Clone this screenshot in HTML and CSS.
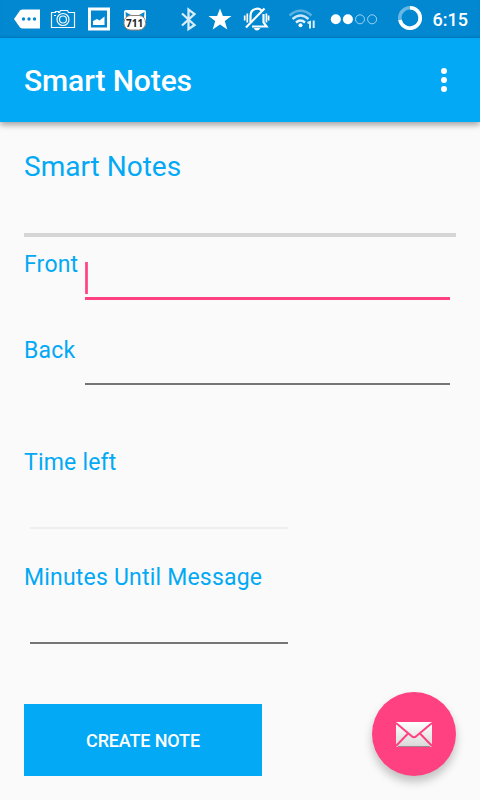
FILE: index.html
```
<!DOCTYPE html>
<html lang="en">
<head>
    <meta charset="UTF-8">
    <meta name="viewport" content="width=device-width, initial-scale=1.0">
    <title>Smart Notes</title>
    <link rel="stylesheet" href="styles.css">
</head>
<body>
    <!-- Status bar -->
    <div class="status-bar">
        <svg class="status-icons" width="480" height="38" viewBox="0 0 480 38">
            <!-- message -->
            <path d="M14 19L20 10.500Q21 9.500 23 9.500H40V28.500H23Q21 28.500 20 27.500Z" fill="#fff"/>
            <g fill="#0288d1"><circle cx="23.500" cy="19" r="1.700"/><circle cx="29" cy="19" r="1.700"/><circle cx="34.500" cy="19" r="1.700"/></g>
            <!-- camera -->
            <g fill="none" stroke="#fff" stroke-opacity=".95" stroke-width="1.200">
                <path d="M51.500 12.500H55.500V11.500H58.500V12.500H59.500L60.500 10.500H67.500L68.500 12.500H74.500V27.500H51.500Z"/>
                <circle cx="63" cy="19.500" r="6"/>
                <circle cx="63" cy="19.500" r="3.500"/>
            </g>
            <path d="M54 15h2v1h-2z" fill="#fff"/>
            <!-- picture -->
            <path fill="#fff" fill-rule="evenodd" d="M88 7.500H110V30.500H88ZM91 10.500V27.500H107V10.500Z"/>
            <path fill="#fff" d="M93 25V21L97 19L99.500 20.500L104.500 16.500V25Z"/>
            <!-- 711 cat -->
            <rect x="124" y="10" width="22" height="16" rx="2" fill="#fff"/>
            <path d="M125.500 12L132 15.500L126 18ZM144.500 12L138 15.500L144 18Z" fill="#0288d1"/>
            <rect x="124" y="15.500" width="21.500" height="14.500" rx="6.500" fill="#fff" stroke="#8b8179"/>
            <text class="badge" x="134.700" y="26.500" text-anchor="middle">711</text>
            <!-- bluetooth -->
            <path d="M182 13.500L194.500 25L188.500 29V9.500L194.500 14L182 25.500" fill="none" stroke="#fff" stroke-opacity=".85" stroke-width="2.300"/>
            <!-- star -->
            <path fill="#fff" d="M220 8.500L222.900 16H231.500L224.800 21L227.300 29.500L220 24.400L212.700 29.500L215.200 21L208.500 16H217.100Z"/>
            <!-- muted bell -->
            <g fill="none" stroke="#fff" stroke-width="2.200">
                <path d="M250.500 22V16Q250.500 10 255.500 9Q259 8 261.500 10.500M263.500 14V22.500L266.500 26.500H252"/>
                <path d="M246 27.500L264.500 8.500"/>
                <path d="M247.300 13.500V22.500M244.700 15.500V20.500M266.400 13.500V22.500M268.600 15.500V20.500" stroke-width="1.700"/>
            </g>
            <path d="M253.500 28H260.500Q257 33 253.500 28Z" fill="#fff"/>
            <!-- wifi -->
            <g fill="none" stroke="#fff" stroke-width="2.400">
                <path d="M289.500 15.500Q300.500 6 311.500 15.500" stroke-opacity=".35"/>
                <path d="M292.500 19Q300.500 12 308.500 19" stroke-opacity=".8"/>
                <path d="M296 22.500Q300.500 18.500 305 22.500" stroke-opacity=".9"/>
            </g>
            <circle cx="300.500" cy="25.300" r="2" fill="#fff"/>
            <path d="M307.500 23L310 22V28.500M313.700 20.500V28" fill="none" stroke="#fff" stroke-opacity=".85" stroke-width="2"/>
            <!-- signal -->
            <circle cx="335.800" cy="19.300" r="5" fill="#fff"/>
            <circle cx="347.900" cy="19.300" r="5" fill="#fff"/>
            <g fill="none" stroke="#fff" stroke-opacity=".6">
                <circle cx="360" cy="19.300" r="4.500"/>
                <circle cx="372.100" cy="19.300" r="4.500"/>
            </g>
            <!-- battery ring -->
            <circle cx="410" cy="18" r="10.200" fill="none" stroke="#fff" stroke-opacity=".4" stroke-width="3.600"/>
            <path d="M410 7.800A10.200 10.200 0 1 1 400 20" fill="none" stroke="#fff" stroke-width="3.600"/>
        </svg>
        <span class="clock">6:15</span>
    </div>

    <header class="app-bar">
        <span class="app-title">Smart Notes</span>
        <button class="menu-button" aria-label="Menu">
            <i></i><i></i><i></i>
        </button>
    </header>

    <main class="content">
        <h1>Smart Notes</h1>
        <hr>

        <div class="row row-front">
            <label for="front">Front</label>
            <div class="field">
                <input class="focused" id="front" type="text">
                <span class="caret"></span>
            </div>
        </div>

        <div class="row row-back">
            <label for="back">Back</label>
            <div class="field">
                <input id="back" type="text">
            </div>
        </div>

        <div class="block block-time">
            <label for="time">Time left</label>
            <input id="time" type="text" disabled>
        </div>

        <div class="block">
            <label for="minutes">Minutes Until Message</label>
            <input id="minutes" type="text">
        </div>

        <button class="create">CREATE NOTE</button>
    </main>

    <!-- Floating button -->
    <button class="fab" aria-label="Mail">
        <svg width="36" height="26" viewBox="0 0 36 26">
            <defs>
                <linearGradient id="paper" x1="0" y1="0" x2="0" y2="1">
                    <stop offset="0" stop-color="#fff"/>
                    <stop offset="1" stop-color="#d8d8d8"/>
                </linearGradient>
            </defs>
            <rect x="0" y="0" width="36" height="25" rx="1" fill="url(#paper)"/>
            <path d="M2 24.500H34" stroke="#a0848c" stroke-width="1"/>
            <path d="M0 1L15.500 14Q18 16.500 20.500 14L36 1M0 24L12 11.500M36 24L24 11.500" fill="none" stroke="#ff4081" stroke-width="2"/>
        </svg>
    </button>
</body>
</html>
```

FILE: styles.css
```
* {
    box-sizing: border-box;
}

body {
    margin: 0;
    height: 800px;
    overflow: hidden;
    background-color: #fafafa;
    color: #03a9f4;
    font-family: Roboto, sans-serif;
}

button {
    border: none;
    padding: 0;
    font-family: inherit;
    cursor: pointer;
}

/* Status bar */
.status-bar {
    position: relative;
    display: flex;
    justify-content: flex-end;
    height: 38px;
    padding-right: 12px;
    background-color: #0288d1;
    box-shadow: inset 0 -1px 1px #027fc4;
}

.status-icons {
    position: absolute;
    top: 0;
    left: 0;
}

.badge {
    font: bold 10px "Open Sans", sans-serif;
    fill: #222;
}

.clock {
    color: #fff;
    font-size: 18px;
    font-weight: 500;
    line-height: 40px;
}

/* App bar */
.app-bar {
    position: relative;
    display: flex;
    justify-content: space-between;
    align-items: center;
    height: 84px;
    padding: 0 24px;
    background-color: #03a9f4;
    box-shadow: 0 3px 6px rgba(0, 0, 0, 0.35);
}

.app-title {
    color: #fff;
    font-size: 30px;
    font-weight: 500;
    line-height: 36px;
    padding-top: 2px;
    letter-spacing: -0.1px;
}

.menu-button {
    display: flex;
    flex-direction: column;
    align-items: center;
    gap: 3px;
    width: 24px;
    background: none;
}

.menu-button i {
    width: 6px;
    height: 6px;
    border-radius: 50%;
    background-color: #fff;
}

/* Form */
.content {
    padding: 28px 24px 0;
}

h1 {
    margin: 0;
    font-size: 28px;
    font-weight: 400;
    line-height: 33px;
}

hr {
    height: 4px;
    margin: 50px 0 13px;
    border: none;
    background-color: #d5d5d5;
}

label {
    height: 28px;
    font-size: 23px;
    line-height: 30px;
    letter-spacing: 0.2px;
}

input {
    display: block;
    width: 100%;
    padding: 0;
    border: none;
    border-bottom: 2px solid #757575;
    background: none;
    outline: none;
    font-size: 27px;
}

input.focused {
    border-bottom: 3px solid #ff4081;
}

input:disabled {
    border-bottom-color: #eee;
}

.row {
    display: grid;
    grid-template-columns: 61px 365px;
}

.row-front {
    margin-bottom: 36px;
}

.row-front input {
    height: 50px;
}

.row-back {
    margin-bottom: 63px;
}

.row-back input {
    height: 49px;
}

.field {
    position: relative;
}

.caret {
    position: absolute;
    left: 0;
    top: 12px;
    width: 3px;
    height: 32px;
    background: linear-gradient(to right, #ff6b9c, #ff4081, #ff6b9c);
}

.block {
    display: flex;
    flex-direction: column;
}

.block input {
    width: 258px;
    height: 53px;
    margin-left: 6px;
}

.block-time {
    margin-bottom: 34px;
}

.create {
    display: block;
    width: 238px;
    height: 72px;
    margin-top: 60px;
    background-color: #03a9f4;
    color: #fff;
    font-size: 18px;
    font-weight: 500;
    letter-spacing: -0.15px;
}

.fab {
    position: absolute;
    left: 372px;
    top: 692px;
    display: flex;
    justify-content: center;
    align-items: center;
    width: 84px;
    height: 84px;
    padding-top: 2px;
    border-radius: 50%;
    background-color: #ff4081;
    box-shadow: 0 6px 10px rgba(0, 0, 0, 0.23);
}
```
